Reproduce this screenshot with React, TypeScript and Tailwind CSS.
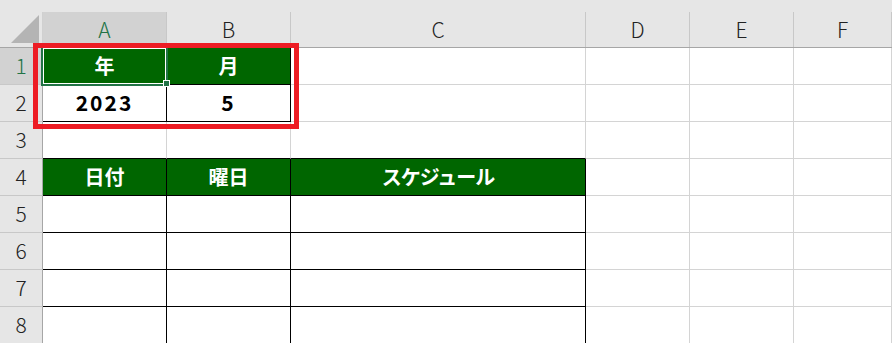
import React from "react";

type CellSpec = {
  text?: string;
  fill?: string;
  color?: string;
  right?: string;
  bottom?: string;
  bold?: boolean;
  extra?: string;
};

const COLS = [
  { key: "A", w: "w-[124px]" },
  { key: "B", w: "w-[124px]" },
  { key: "C", w: "w-[295px]" },
  { key: "D", w: "w-[104px]" },
  { key: "E", w: "w-[104px]" },
  { key: "F", w: "flex-1" },
];

const GREEN = "bg-[#006600]";
const BLACK_R = "border-r-black";
const BLACK_B = "border-b-black";

const cellAt = (row: number, col: string): CellSpec => {
  const inTop = col === "A" || col === "B";
  const inSched = col === "A" || col === "B" || col === "C";

  if (row === 1 && inTop) {
    return {
      text: col === "A" ? "年" : "月",
      fill: GREEN,
      color: "text-white",
      right: BLACK_R,
      bottom: BLACK_B,
      bold: true,
    };
  }
  if (row === 2 && inTop) {
    return {
      text: col === "A" ? "2023" : "5",
      color: "text-black",
      right: BLACK_R,
      bottom: BLACK_B,
      bold: true,
      extra: "text-[21px] tracking-[2px]",
    };
  }
  if (row === 3 && inSched) {
    return { bottom: BLACK_B };
  }
  if (row === 4 && inSched) {
    const labels: Record<string, string> = { A: "日付", B: "曜日", C: "スケジュール" };
    return {
      text: labels[col],
      fill: GREEN,
      color: "text-white",
      right: BLACK_R,
      bottom: BLACK_B,
      bold: true,
      extra: col === "C" ? "tracking-[-1px]" : "",
    };
  }
  if (row >= 5 && inSched) {
    return { right: BLACK_R, bottom: BLACK_B };
  }
  return {};
};

const ROWS = [1, 2, 3, 4, 5, 6, 7, 8];

export default function App() {
  return (
    <div
      className="relative w-[892px] h-[343px] overflow-hidden bg-white"
      style={{ fontFamily: '"Noto Sans CJK JP", "Noto Sans", sans-serif' }}
    >
      {/* top strip */}
      <div className="h-[12px] bg-[#e6e6e6]" />

      {/* column headers */}
      <div className="flex h-[36px] bg-[#e6e6e6] border-b border-b-[#a6a6a6]">
        <div className="w-[43px] h-full border-r border-r-[#d0d0d0] shrink-0">
          <svg width="43" height="35" viewBox="0 0 43 35">
            <polygon points="39,3 39,31 11,31" fill="#b4b4b4" />
          </svg>
        </div>
        {COLS.map((c) => (
          <div
            key={c.key}
            className={`${c.w} shrink-0 h-full flex items-center justify-center border-r border-r-[#c8c8c8] text-[21px] font-light ${
              c.key === "A" ? "bg-[#d2d2d2] text-[#217346]" : "text-[#222222]"
            }`}
          >
            {c.key}
          </div>
        ))}
      </div>

      {/* rows */}
      {ROWS.map((r) => (
        <div key={r} className="flex h-[37px]">
          <div
            className={`w-[43px] shrink-0 h-full flex items-center justify-center border-r border-r-[#a6a6a6] border-b border-b-[#c8c8c8] text-[21px] font-light ${
              r === 1 ? "bg-[#d2d2d2] text-[#217346]" : "bg-[#e6e6e6] text-[#222222]"
            }`}
          >
            {r}
          </div>
          {COLS.map((c) => {
            const s = cellAt(r, c.key);
            return (
              <div
                key={c.key}
                className={`${c.w} shrink-0 h-full flex items-center justify-center border-r border-b text-[20px] ${
                  s.fill ?? "bg-white"
                } ${s.color ?? "text-black"} ${s.right ?? "border-r-[#d4d4d4]"} ${
                  s.bottom ?? "border-b-[#d4d4d4]"
                } ${s.bold ? "font-bold" : ""} ${s.extra ?? ""}`}
              >
                {s.text}
              </div>
            );
          })}
        </div>
      ))}

      {/* active cell A1 */}
      <div className="absolute left-[41px] top-[46px] w-[127px] h-[40px] border-2 border-[#217346]">
        <div className="w-full h-full border border-white" />
      </div>
      <div className="absolute left-[163px] top-[80px] w-[7px] h-[7px] bg-[#217346] border border-white" />

      {/* red highlight box */}
      <div className="absolute left-[33px] top-[43px] w-[266px] h-[86px] border-[5px] border-[#ed1c24]" />
    </div>
  );
}
